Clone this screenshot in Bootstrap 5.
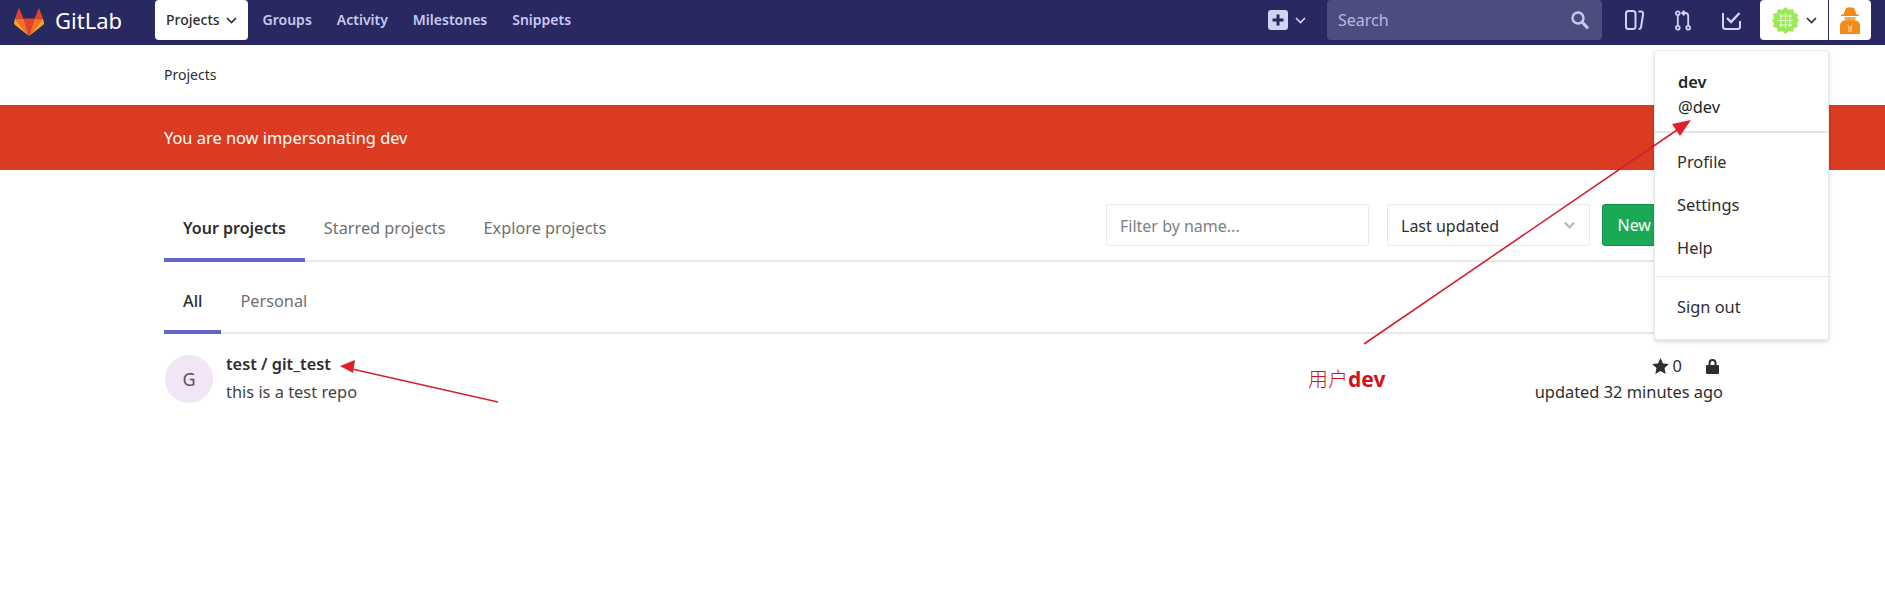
<!DOCTYPE html>
<html lang="en">
<head>
  <meta charset="UTF-8">
  <title>Projects · GitLab</title>
  <meta name="viewport" content="width=device-width, initial-scale=1">
  <link href="https://cdn.jsdelivr.net/npm/bootstrap@5.3.3/dist/css/bootstrap.min.css" rel="stylesheet">
  <style>
    body { font-family: "Noto Sans", "Noto Sans CJK SC", sans-serif; font-size: 15px; color: #2e2e2e; background: #fff; position: relative; height: 605px; overflow: hidden; }
    .gl-top { height: 45px; background: #292961; padding: 0 14px; flex-wrap: nowrap; justify-content: flex-start; }
    .gl-brand { color: #fff; font-size: 22px; margin-left: 11px; margin-right: 34px; width: 66px; line-height: 40px; }
    .gl-top-links { height: 45px; align-items: flex-start; }
    .gl-link { color: #c8c8ee; font-size: 14px; font-weight: 600; text-decoration: none; height: 40px; line-height: 40px; margin-right: 25px; white-space: nowrap; }
    .gl-link-on { background: #fff; color: #2e2e2e; border-radius: 4px; font-weight: 500; padding: 0 11px; margin-right: 15px; display: flex; align-items: center; gap: 6px; }
    .gl-right { margin-left: auto; height: 45px; align-items: flex-start; }
    .gl-plus { width: 59px; height: 40px; margin-right: 0; gap: 7px; }
    .gl-search { width: 275px; height: 40px; background: #4c4c7e; border-radius: 4px; padding: 0 13px 0 11px; color: #b9b9dc; font-size: 16px; line-height: 42px; }
    .gl-ico { height: 40px; }
    .gl-ico-boards { margin-left: 23px; width: 19px; }
    .gl-ico-mr { margin-left: 31px; width: 16px; }
    .gl-ico-todo { margin-left: 31px; width: 19px; }
    .gl-user { margin-left: 19px; width: 68px; height: 40px; background: #fff; border-radius: 4px 0 0 4px; padding-left: 12px; gap: 7px; }
    .gl-spy { margin-left: 1px; width: 42px; height: 40px; background: #fff; border-radius: 0 4px 4px 0; }
    .gl-crumb { height: 60px; padding: 0 0 0 164px; font-size: 14px; line-height: 60px; }
    .gl-banner { height: 65px; background: #db3b21; color: #fff; padding-left: 164px; font-size: 16.4px; line-height: 66px; }
    .gl-page { margin: 0 162px 0 164px; }
    .gl-tabs { height: 92px; border-bottom: 2px solid #e8e8e8; }
    .gl-tab { color: #707070; font-size: 16.3px; text-decoration: none; padding: 0 19px; height: 92px; line-height: 116px; white-space: nowrap; }
    .gl-tab-on { color: #2e2e2e; font-weight: 600; font-size: 16px; border-bottom: 4px solid #6666c4; height: 92px; margin-bottom: -2px; }
    .gl-sub { height: 72px; border-bottom: 2px solid #e8e8e8; }
    .gl-sub .gl-tab { height: 72px; line-height: 78px; }
    .gl-sub .gl-tab-on { font-weight: 500; font-size: 16.3px; }
    .gl-tools { padding-top: 34px; }
    .gl-filter { width: 263px; height: 42px; border-color: #e8e8e8; font-size: 16px; border-radius: 3px; padding: 2px 13px 0; }
    .gl-filter::placeholder { color: #808080; }
    .gl-sort { width: 203px; height: 42px; border-color: #e8e8e8; color: #2e2e2e; font-size: 16px; border-radius: 3px; padding: 2px 13px 0; margin-left: 18px; background-size: 15px 15px; background-image: url("data:image/svg+xml,%3csvg xmlns='http://www.w3.org/2000/svg' viewBox='0 0 16 16'%3e%3cpath fill='none' stroke='%23bbb' stroke-width='2.500' d='M3 5l5 5 5-5'/%3e%3c/svg%3e"); }
    .gl-new { height: 42px; margin-left: 12px; width: 121px; background: #1aaa55; border-color: #168f48; font-size: 16px; padding: 0; border-radius: 3px; white-space: nowrap; }
    .gl-row { padding-top: 21px; }
    .gl-avatar { width: 48px; height: 48px; border-radius: 50%; background: #f0e6f6; color: #555; font-size: 18px; margin-right: 13px; margin-left: 1px; }
    .gl-title { font-size: 16.3px; font-weight: 600; line-height: 20px; margin-top: -1px; }
    .gl-desc { font-size: 16.4px; line-height: 20px; margin-top: 8px; color: #444; }
    .gl-meta { font-size: 16.4px; line-height: 22px; text-align: right; color: #2e2e2e; }
    .gl-menu { position: absolute; left: 1654px; top: 50px; width: 175px; height: 290px; padding: 0; border: 1px solid #e8e8e8; border-radius: 3px; box-shadow: 0 2px 4px rgba(0,0,0,.15); font-size: 16.4px; display: block; }
    .gl-menu-head { padding: 18px 23px 0; height: 82px; margin-bottom: 7px; border-bottom: 2px solid #e5e5e5; line-height: 25px; }
    .gl-menu-head b { font-weight: 600; display: block; }
    .gl-menu .dropdown-item { padding: 0 22px; height: 43px; line-height: 43px; color: #2e2e2e; }
    .gl-menu .dropdown-divider { margin: 7px 0 8px; border-color: #e8e8e8; opacity: 1; }
    .gl-note { position: absolute; left: 1308px; top: 366px; z-index: 1001; color: #d1121f; font-size: 21px; line-height: 26px; font-weight: 700; white-space: nowrap; }
    .gl-note span { font-weight: 300; font-size: 20px; }
    .gl-arrows { position: absolute; left: 0; top: 0; z-index: 1001; pointer-events: none; }
  </style>
</head>
<body>
  <!-- barra superior -->
  <nav class="navbar gl-top align-items-start">
    <svg width="30" height="28" viewBox="0 0 30 28" class="mt-2">
      <path d="M15 28 L9.500 10.500 H20.500Z" fill="#e24329"/>
      <path d="M15 28 L1 10.500 H9.500Z" fill="#fc6d26"/>
      <path d="M15 28 L29 10.500 H20.500Z" fill="#fc6d26"/>
      <path d="M1 10.500 L0 15 Q0 16.500 1 17 L15 28Z" fill="#fca326"/>
      <path d="M29 10.500 L30 15 Q30 16.500 29 17 L15 28Z" fill="#fca326"/>
      <path d="M1 10.500 L5 0 L9.500 10.500Z" fill="#e24329"/>
      <path d="M29 10.500 L25 0 L20.500 10.500Z" fill="#e24329"/>
    </svg>
    <span class="gl-brand">GitLab</span>
    <div class="d-flex gl-top-links">
      <a class="gl-link gl-link-on" href="#">Projects
        <svg width="11" height="7" viewBox="0 0 11 7"><path d="M1 1l4.500 4.500L10 1" fill="none" stroke="#2e2e2e" stroke-width="1.700"/></svg>
      </a>
      <a class="gl-link" href="#">Groups</a>
      <a class="gl-link" href="#">Activity</a>
      <a class="gl-link" href="#">Milestones</a>
      <a class="gl-link" href="#">Snippets</a>
    </div>
    <div class="d-flex gl-right">
      <div class="d-flex align-items-center gl-plus">
        <svg width="20" height="20" viewBox="0 0 20 20"><rect width="20" height="20" rx="3" fill="#d2d2f2"/><path d="M10 4.500v11M4.500 10h11" stroke="#292961" stroke-width="3"/></svg>
        <svg width="11" height="7" viewBox="0 0 11 7"><path d="M1 1l4.500 4.500L10 1" fill="none" stroke="#d2d2f2" stroke-width="1.600"/></svg>
      </div>
      <div class="d-flex align-items-center justify-content-between gl-search">
        <span>Search</span>
        <svg width="18" height="19" viewBox="0 0 18 19"><circle cx="7" cy="7" r="5.500" fill="none" stroke="#c8c8ee" stroke-width="2.400"/><path d="M11 11l6 6.500" stroke="#c8c8ee" stroke-width="3"/></svg>
      </div>
      <div class="d-flex align-items-center gl-ico gl-ico-boards">
        <svg width="19" height="20" viewBox="0 0 19 20"><rect x="1" y="1" width="9.500" height="18" rx="2.500" fill="none" stroke="#d2d2f2" stroke-width="2"/><path d="M13.500 1.500h2.500q2.500 0 2 3l-2 13q-.3 1.500-2.500 1.500" fill="none" stroke="#d2d2f2" stroke-width="2"/></svg>
      </div>
      <div class="d-flex align-items-center gl-ico gl-ico-mr">
        <svg width="16" height="21" viewBox="0 0 16 21"><g fill="none" stroke="#d2d2f2" stroke-width="1.800"><circle cx="2.800" cy="3.300" r="1.900"/><circle cx="2.800" cy="17.800" r="1.900"/><circle cx="13.200" cy="17.800" r="1.900"/><path d="M2.800 5.200v10.700M13.200 15.900V6q0-3-3-3H7.500"/><path d="M9.500 .8L7 3l2.500 2.300"/></g></svg>
      </div>
      <div class="d-flex align-items-center gl-ico gl-ico-todo">
        <svg width="19" height="19" viewBox="0 0 19 19"><path d="M1 2v13.500q0 2.500 2.500 2.500h12q2.500 0 2.500-2.500V10" fill="none" stroke="#d2d2f2" stroke-width="2"/><path d="M5 7l4 4 8.500-9" fill="none" stroke="#d2d2f2" stroke-width="2.300"/></svg>
      </div>
      <div class="d-flex align-items-center gl-user">
        <svg width="27" height="27" viewBox="0 0 27 27">
          <path d="M13.500 0l3.500 3 4-1 1 4 4 1-1 4 2 2.500-2 2.500 1 4-4 1-1 4-4-1-3.500 3-3.500-3-4 1-1-4-4-1 1-4-2-2.500 2-2.500-1-4 4-1 1-4 4 1z" fill="#9bea55"/>
          <g fill="none" stroke="#eafbdc" stroke-width="1"><path d="M9 7v13M13.500 6v15M18 7v13M7 9h13M6 13.500h15M7 18h13"/></g>
        </svg>
        <svg width="11" height="7" viewBox="0 0 11 7"><path d="M1 1l4.500 4.500L10 1" fill="none" stroke="#2e2e2e" stroke-width="1.700"/></svg>
      </div>
      <div class="d-flex align-items-center justify-content-center gl-spy">
        <svg width="20" height="27" viewBox="0 0 20 27">
          <path d="M3 8.500L6 1q4-1.500 8 0l3 7.500z" fill="#f28c18"/>
          <path d="M1 7.500h18v1.500H1z" fill="#f28c18"/>
          <path d="M4.500 10h11v2.500q-1 2-5.500 2t-5.500-2z" fill="#f7a94d"/>
          <path d="M0 27v-8q0-4.500 4-5.500h12q4 1 4 5.500v8z" fill="#f28c18"/>
          <path d="M6.500 17l2 2.500V25h1V19.500zM13.500 17l-2 2.500V25h-1V19.500z" fill="#ffe1b3"/>
        </svg>
      </div>
    </div>
  </nav>

  <div class="gl-crumb">Projects</div>
  <div class="gl-banner">You are now impersonating dev</div>

  <div class="gl-page">
    <div class="d-flex gl-tabs justify-content-between">
      <div class="d-flex">
        <a class="gl-tab gl-tab-on" href="#">Your projects</a>
        <a class="gl-tab" href="#">Starred projects</a>
        <a class="gl-tab" href="#">Explore projects</a>
      </div>
      <div class="d-flex align-items-start gl-tools ms-auto">
        <input class="form-control gl-filter" placeholder="Filter by name...">
        <select class="form-select gl-sort"><option>Last updated</option></select>
        <button class="btn btn-success gl-new">New project</button>
      </div>
    </div>
    <div class="d-flex gl-sub">
      <a class="gl-tab gl-tab-on" href="#">All</a>
      <a class="gl-tab" href="#">Personal</a>
    </div>
    <div class="d-flex gl-row">
      <div class="d-flex align-items-center justify-content-center gl-avatar">G</div>
      <div class="flex-grow-1">
        <div class="gl-title">test / git_test</div>
        <div class="gl-desc">this is a test repo</div>
      </div>
      <div class="gl-meta">
        <div class="d-flex justify-content-end align-items-center" style="height:22px">
          <svg width="17" height="16" viewBox="0 0 17 16" class="me-1"><path d="M8.500 0l2.500 5.400 5.900.7-4.400 4 1.200 5.900-5.200-3-5.200 3 1.200-5.900L.1 6.100 6 5.400z" fill="#2e2e2e"/></svg>
          <span>0</span>
          <svg width="13" height="15" viewBox="0 0 13 15" class="ms-4 me-1"><path d="M1 6h11q1 0 1 1v7q0 1-1 1H1q-1 0-1-1V7q0-1 1-1z" fill="#2e2e2e"/><path d="M3.500 6.500V4a3 3 0 0 1 6 0v2.500" fill="none" stroke="#2e2e2e" stroke-width="2"/></svg>
        </div>
        <div class="mt-1">updated 32 minutes ago</div>
      </div>
    </div>
  </div>

  <!-- menu do usuário -->
  <div class="dropdown-menu gl-menu">
    <div class="gl-menu-head"><b>dev</b>@dev</div>
    <a class="dropdown-item" href="#">Profile</a>
    <a class="dropdown-item" href="#">Settings</a>
    <a class="dropdown-item" href="#">Help</a>
    <hr class="dropdown-divider">
    <a class="dropdown-item" href="#">Sign out</a>
  </div>

  <!-- anotações vermelhas do print -->
  <svg class="gl-arrows" width="1885" height="605" viewBox="0 0 1885 605">
    <path d="M1364 344L1680 128" stroke="#d1232f" stroke-width="1.600"/>
    <path d="M1691 120l-19 4 8 12z" fill="#e0202c"/>
    <path d="M498 402L352 369" stroke="#d1232f" stroke-width="1.600"/>
    <path d="M340 366l15-6-2 13z" fill="#e0202c"/>
  </svg>
  <div class="gl-note"><span>用户</span>dev</div>

  <script src="https://cdn.jsdelivr.net/npm/bootstrap@5.3.3/dist/js/bootstrap.bundle.min.js"></script>
</body>
</html>
